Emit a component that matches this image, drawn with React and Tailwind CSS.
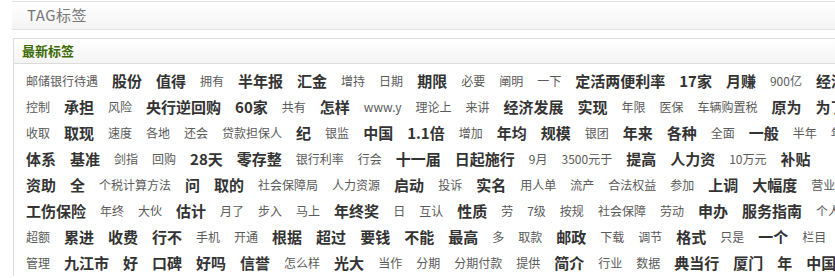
import React from 'react';

const rows = [
    ['邮储银行待遇', '*股份', '*值得', '拥有', '*半年报', '*汇金', '增持', '日期', '*期限', '必要', '阐明', '一下', '*定活两便利率', '*17家', '*月赚', '900亿', '*经济'],
    ['控制', '*承担', '风险', '*央行逆回购', '*60家', '共有', '*怎样', 'www.y', '理论上', '来讲', '*经济发展', '*实现', '年限', '医保', '车辆购置税', '*原为', '*为了'],
    ['收取', '*取现', '速度', '各地', '还会', '贷款担保人', '*纪', '银监', '*中国', '*1.1倍', '增加', '*年均', '*规模', '银团', '*年来', '*各种', '全面', '*一般', '半年', '年度'],
    ['*体系', '*基准', '剑指', '回购', '*28天', '*零存整', '银行利率', '行会', '*十一届', '*日起施行', '9月', '3500元于', '*提高', '*人力资', '10万元', '*补贴'],
    ['*资助', '*全', '个税计算方法', '*问', '*取的', '社会保障局', '人力资源', '*启动', '投诉', '*实名', '用人单', '流产', '合法权益', '参加', '*上调', '*大幅度', '营业'],
    ['*工伤保险', '年终', '大伙', '*估计', '月了', '步入', '马上', '*年终奖', '日', '互认', '*性质', '劳', '7级', '按规', '社会保障', '劳动', '*申办', '*服务指南', '个人'],
    ['超额', '*累进', '*收费', '*行不', '手机', '开通', '*根据', '*超过', '*要钱', '*不能', '*最高', '多', '取款', '*邮政', '下载', '调节', '*格式', '只是', '*一个', '栏目'],
    ['管理', '*九江市', '*好', '*口碑', '*好吗', '*信誉', '怎么样', '*光大', '当作', '分期', '分期付款', '提供', '*简介', '行业', '数据', '*典当行', '*厦门', '*年', '*中国'],
];

const font = { fontFamily: '"SimSun", "Noto Sans CJK SC", "Liberation Sans", sans-serif' };

const Tag = ({ label }) => {
    const bold = label.startsWith('*');
    const text = bold ? label.slice(1) : label;
    return (
        <a className={bold ? 'text-[15px] font-bold text-[#333] shrink-0' : 'text-[12px] text-[#5a5a5a] shrink-0'}>
            {text}
        </a>
    );
};

const App = () => {
    return (
        <div className="w-[835px] h-[278px] overflow-hidden bg-white" style={font}>
            {/* page title */}
            <div className="ml-[12px] mt-[1px] w-[900px] h-[29px] border-t border-b border-[#e2e2e2] bg-gradient-to-b from-white to-[#f4f4f4] flex items-center pl-[15px]">
                <span className="text-[15px] text-[#777] tracking-[0.5px]">TAG标签</span>
            </div>

            {/* newest tags box */}
            <div className="ml-[13px] mt-[8px] w-[900px] border-l border-t border-[#dcdcdc]">
                <div className="h-[25px] border-b border-[#dcdcdc] bg-gradient-to-b from-white to-[#f4f4f4] flex items-center pl-[8px]">
                    <span className="text-[13px] font-bold text-[#3b6a00]">最新标签</span>
                </div>
                <div className="pl-[12px] pt-[4px]">
                    {rows.map((row, i) => (
                        <div key={i} className="h-[26px] flex items-center gap-[14px] whitespace-nowrap">
                            {row.map((t, j) => <Tag key={j} label={t} />)}
                        </div>
                    ))}
                </div>
            </div>
        </div>
    );
};

export default App;
